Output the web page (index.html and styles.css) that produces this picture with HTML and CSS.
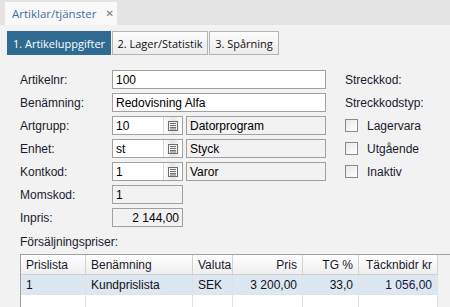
FILE: index.html
```html
<!DOCTYPE html>
<html>
<head>
<meta charset="utf-8">
<link rel="stylesheet" href="styles.css">
</head>
<body>
<div class="topbar">
  <div class="doc-tab"><span class="doc-title">Artiklar/tjänster</span><span class="close">✕</span></div>
</div>
<div class="page">
  <div class="subtabs">
    <div class="subtab t1 active">1. Artikeluppgifter</div>
    <div class="subtab t2">2. Lager/Statistik</div>
    <div class="subtab t3">3. Spårning</div>
  </div>
  <div class="form">
    <div class="left">
      <div class="row"><label>Artikelnr:</label><div class="field wide">100</div></div>
      <div class="row"><label>Benämning:</label><div class="field wide">Redovisning Alfa</div></div>
      <div class="row"><label>Artgrupp:</label>
        <div class="combo"><div class="cval">10</div><div class="cbtn"><svg width="10" height="10" viewBox="0 0 10 10"><rect x="0.5" y="0.5" width="9" height="9" fill="#f4f4f4" stroke="#6e6e6e"/><path d="M2 2.5h6M2 4.5h6M2 6.5h6M2 8h6" stroke="#6e6e6e" stroke-width="1"/></svg></div></div>
        <div class="field ro desc">Datorprogram</div></div>
      <div class="row"><label>Enhet:</label>
        <div class="combo"><div class="cval">st</div><div class="cbtn"><svg width="10" height="10" viewBox="0 0 10 10"><rect x="0.5" y="0.5" width="9" height="9" fill="#f4f4f4" stroke="#6e6e6e"/><path d="M2 2.5h6M2 4.5h6M2 6.5h6M2 8h6" stroke="#6e6e6e" stroke-width="1"/></svg></div></div>
        <div class="field ro desc">Styck</div></div>
      <div class="row"><label>Kontkod:</label>
        <div class="combo"><div class="cval">1</div><div class="cbtn"><svg width="10" height="10" viewBox="0 0 10 10"><rect x="0.5" y="0.5" width="9" height="9" fill="#f4f4f4" stroke="#6e6e6e"/><path d="M2 2.5h6M2 4.5h6M2 6.5h6M2 8h6" stroke="#6e6e6e" stroke-width="1"/></svg></div></div>
        <div class="field ro desc">Varor</div></div>
      <div class="row"><label>Momskod:</label><div class="field ro short">1</div></div>
      <div class="row"><label>Inpris:</label><div class="field ro short num">2 144,00</div></div>
    </div>
    <div class="right">
      <div class="rrow">Streckkod:</div>
      <div class="rrow">Streckkodstyp:</div>
      <div class="rrow"><span class="cb"></span>Lagervara</div>
      <div class="rrow"><span class="cb"></span>Utgående</div>
      <div class="rrow"><span class="cb"></span>Inaktiv</div>
    </div>
  </div>
  <div class="section">Försäljningspriser:</div>
  <div class="grid">
    <div class="gh c1">Prislista</div>
    <div class="gh c2">Benämning</div>
    <div class="gh c3">Valuta</div>
    <div class="gh c4 r">Pris</div>
    <div class="gh c5 r">TG %</div>
    <div class="gh c6 r">Täcknbidr kr</div>
    <div class="gh fill"></div>
    <div class="gd sel">1</div>
    <div class="gd sel">Kundprislista</div>
    <div class="gd sel">SEK</div>
    <div class="gd sel r">3 200,00</div>
    <div class="gd sel r">33,0</div>
    <div class="gd sel r navy">1 056,00</div>
    <div class="gd fill"></div>
    <div class="ge"></div><div class="ge"></div><div class="ge"></div><div class="ge"></div><div class="ge"></div><div class="ge"></div><div class="ge fill"></div>
  </div>
</div>
</body>
</html>
```
FILE: styles.css
```css
html, body {
  margin: 0;
  padding: 0;
}
body {
  width: 450px;
  height: 307px;
  overflow: hidden;
  background: #f2f2f2;
  font-family: "Liberation Sans", Arial, sans-serif;
  font-size: 12px;
  color: #1a1a2e;
}
.topbar {
  height: 26px;
  background: #e4e4e4;
  display: flex;
  align-items: flex-end;
  padding-left: 5px;
  box-sizing: border-box;
  border-bottom: 1px solid #f2f2f2;
}
.doc-tab {
  height: 23px;
  width: 112px;
  background: #f9f9f9;
  display: flex;
  align-items: center;
  padding-left: 7px;
  box-sizing: border-box;
  font-family: "Open Sans", "Noto Sans", sans-serif;
  font-size: 11.5px;
  color: #3d6e9e;
}
.close {
  margin-left: 9px;
  color: #777;
  font-size: 10px;
  font-family: "DejaVu Sans", sans-serif;
}
.subtabs {
  display: flex;
  padding: 5px 0 0 7px;
  gap: 1px;
}
.subtab {
  height: 24px;
  box-sizing: border-box;
  padding: 0;
  display: flex;
  align-items: center;
  justify-content: center;
  border: 1px solid #b4b4b4;
  background: linear-gradient(#fcfcfc, #ececec);
  font-family: "Open Sans", "Noto Sans", sans-serif;
  font-size: 11px;
  color: #111;
  white-space: nowrap;
}
.subtab.t1 { width: 104px; }
.subtab.t2 { width: 96px; }
.subtab.t3 { width: 70px; }
.subtab.active {
  background: #2f6b91;
  border-color: #2f6b91;
  color: #fff;
}
.form {
  display: flex;
  margin-top: 15px;
  padding-left: 20px;
}
.left {
  display: flex;
  flex-direction: column;
  gap: 4px;
  width: 325px;
}
.row {
  display: flex;
  align-items: center;
  height: 19px;
}
.row label {
  width: 92px;
  flex: none;
}
.field {
  height: 19px;
  box-sizing: border-box;
  border: 1px solid #a0a0a0;
  background: #fff;
  display: flex;
  align-items: center;
  padding: 0 3px;
  white-space: nowrap;
  color: #000;
}
.field.wide { width: 214px; }
.field.ro { background: #f2f2f2; }
.field.desc { width: 140px; margin-left: 3px; }
.field.short { width: 71px; }
.field.num { justify-content: flex-end; }
.combo {
  width: 71px;
  height: 19px;
  box-sizing: border-box;
  border: 1px solid #a0a0a0;
  background: #fff;
  display: flex;
}
.cval {
  flex: 1;
  padding: 0 3px;
  display: flex;
  align-items: center;
  color: #000;
}
.cbtn {
  width: 18px;
  display: flex;
  align-items: center;
  justify-content: center;
  background: linear-gradient(90deg, #ffffff, #e6e6e6 50%, #ffffff);
  border-left: 1px solid #d8d8d8;
}
.right {
  display: flex;
  flex-direction: column;
  gap: 4px;
}
.rrow {
  height: 19px;
  display: flex;
  align-items: center;
}
.cb {
  width: 11px;
  height: 11px;
  border: 1px solid #8a8a8a;
  background: linear-gradient(135deg, #e8e8e8, #ffffff);
  margin-right: 9px;
}
.section {
  margin: 6px 0 0 20px;
  height: 17px;
  display: flex;
  align-items: center;
}
.grid {
  margin: 4px 0 0 20px;
  display: grid;
  grid-template-columns: 65px 107px 40px 70px 56px 79px 1fr;
  grid-template-rows: 20px 20px 20px;
  border-top: 1px solid #a0a0a0;
  border-left: 1px solid #a0a0a0;
  background: #f2f2f2;
}
.gh {
  background: linear-gradient(#ffffff, #eeeeee);
  border-right: 1px solid #d2d2d2;
  border-bottom: 1px solid #d2d2d2;
  display: flex;
  align-items: center;
  padding: 0 5px;
  white-space: nowrap;
  overflow: hidden;
}
.gh.fill {
  background: #f2f2f2;
  border-right: none;
  border-bottom: none;
}
.r { justify-content: flex-end; }
.gd {
  background: #fff;
  border-right: 1px solid #e2e2e2;
  border-bottom: 1px solid #e2e2e2;
  display: flex;
  align-items: center;
  padding: 0 5px;
  white-space: nowrap;
}
.gd.sel { background: #dce7f1; color: #111; }
.gd.navy { color: #1a1546; }
.gd.fill { background: #f2f2f2; border: none; }
.ge {
  background: #fff;
  border-right: 1px solid #e2e2e2;
}
.ge.fill { background: #f2f2f2; border: none; }
```
